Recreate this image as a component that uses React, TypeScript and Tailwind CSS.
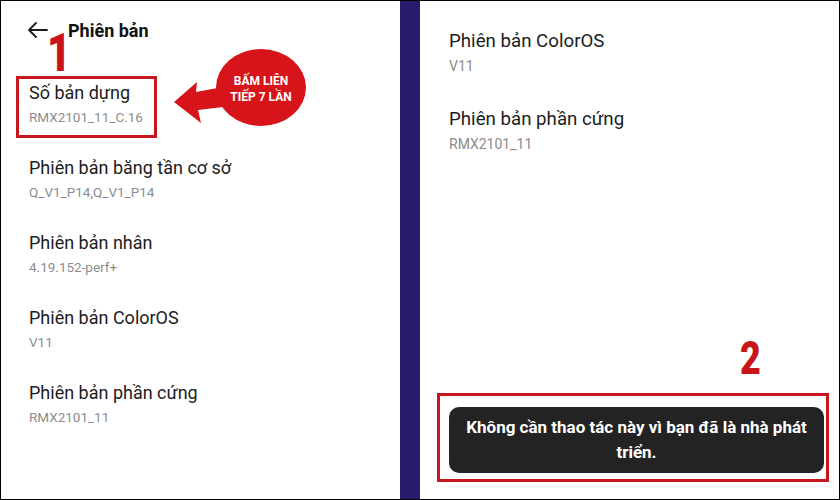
import React from "react";

const leftRows = [
  { title: "Phiên bản băng tần cơ sở", sub: "Q_V1_P14,Q_V1_P14" },
  { title: "Phiên bản nhân", sub: "4.19.152-perf+" },
  { title: "Phiên bản ColorOS", sub: "V11" },
  { title: "Phiên bản phần cứng", sub: "RMX2101_11" },
];

const rightRows = [
  { title: "Phiên bản ColorOS", sub: "V11" },
  { title: "Phiên bản phần cứng", sub: "RMX2101_11" },
];

const font = { fontFamily: "Roboto, 'Noto Sans', sans-serif" };

const InfoText = ({ title, sub, big }: { title: string; sub: string; big?: boolean }) => (
  <>
    <div className={big ? "text-[18.7px] leading-[24px] text-[#1c1c1c]" : "text-[18px] leading-[24px] text-[#1c1c1c]"}>
      {title}
    </div>
    <div className={big ? "mt-[4px] text-[14px] leading-[18px] text-[#8c8c8c]" : "mt-[3px] text-[13.5px] leading-[18px] text-[#8c8c8c]"}>
      {sub}
    </div>
  </>
);

const InfoRow = ({ title, sub, big }: { title: string; sub: string; big?: boolean }) => (
  <div className={big ? "h-[78px]" : "h-[75px]"}>
    <InfoText title={title} sub={sub} big={big} />
  </div>
);

const BigDigit = ({ children, className }: { children: string; className: string }) => (
  <div
    className={`absolute font-[Roboto] font-black text-[#c8141b] leading-none scale-x-[0.78] origin-left ${className}`}
  >
    {children}
  </div>
);

export default function App() {
  return (
    <div className="w-[840px] h-[500px] border border-black flex bg-white" style={font}>
      {/* left screen */}
      <div className="w-[399px] relative bg-white">
        <div className="flex items-center h-[22px] mt-[18px] pl-[26px]">
          <svg width="22" height="16" viewBox="0 0 22 16" fill="none" stroke="#1c1c1c" strokeWidth="1.8" strokeLinecap="round" strokeLinejoin="round">
            <path d="M20 8H2M9 1L2 8l7 7" />
          </svg>
          <span className="ml-[19px] text-[18px] font-bold text-[#111]">Phiên bản</span>
        </div>

        <div className="mt-[40px] pl-[28px]">
          {/* first row, boxed in red */}
          <div className="-mt-[5px] mb-[18px] -ml-[13px] w-[141px] h-[62px] border-[3px] border-[#c8161d] pl-[10px] pt-[2px]">
            <InfoText title="Số bản dựng" sub="RMX2101_11_C.16" />
          </div>
          {leftRows.map((r) => (
            <InfoRow key={r.title} title={r.title} sub={r.sub} />
          ))}
        </div>

        {/* annotations */}
        <BigDigit className="left-[46px] top-[26px] text-[53px]">1</BigDigit>
        <svg className="absolute left-[168px] top-[44px]" width="145" height="86" viewBox="168 44 145 86">
          <path d="M173 101 L196 81 L195 91 L222 86 L222 106 L197 109 L200 122 Z" fill="#d7141a" />
          <ellipse cx="260" cy="86.5" rx="45" ry="38.5" fill="#d7141a" />
        </svg>
        <div className="absolute left-[215px] top-[72px] w-[90px] text-center text-white font-bold text-[12px] leading-[16px]">
          <div>BẤM LIÊN</div>
          <div>TIẾP 7 LẦN</div>
        </div>
      </div>

      {/* divider strip */}
      <div className="w-[20px] bg-[#2a1a6c]" />

      {/* right screen */}
      <div className="flex-1 flex flex-col bg-white">
        <div className="pt-[28px] pl-[29px]">
          {rightRows.map((r) => (
            <InfoRow key={r.title} title={r.title} sub={r.sub} big />
          ))}
        </div>

        <div className="mt-auto mb-[17px] ml-[17px] w-[392px] relative">
          <BigDigit className="left-[303px] -top-[58px] text-[46px]">2</BigDigit>
          <div className="border-[3px] border-[#c8161d] pt-[11px] pb-[6px] pl-[9px] pr-[2px]">
            <div className="h-[66px] rounded-[10px] bg-[#232323] flex items-center justify-center px-3">
              <p className="text-white font-bold text-[17px] leading-[25px] text-center">
                Không cần thao tác này vì bạn đã là nhà phát triển.
              </p>
            </div>
          </div>
        </div>
      </div>
    </div>
  );
}
